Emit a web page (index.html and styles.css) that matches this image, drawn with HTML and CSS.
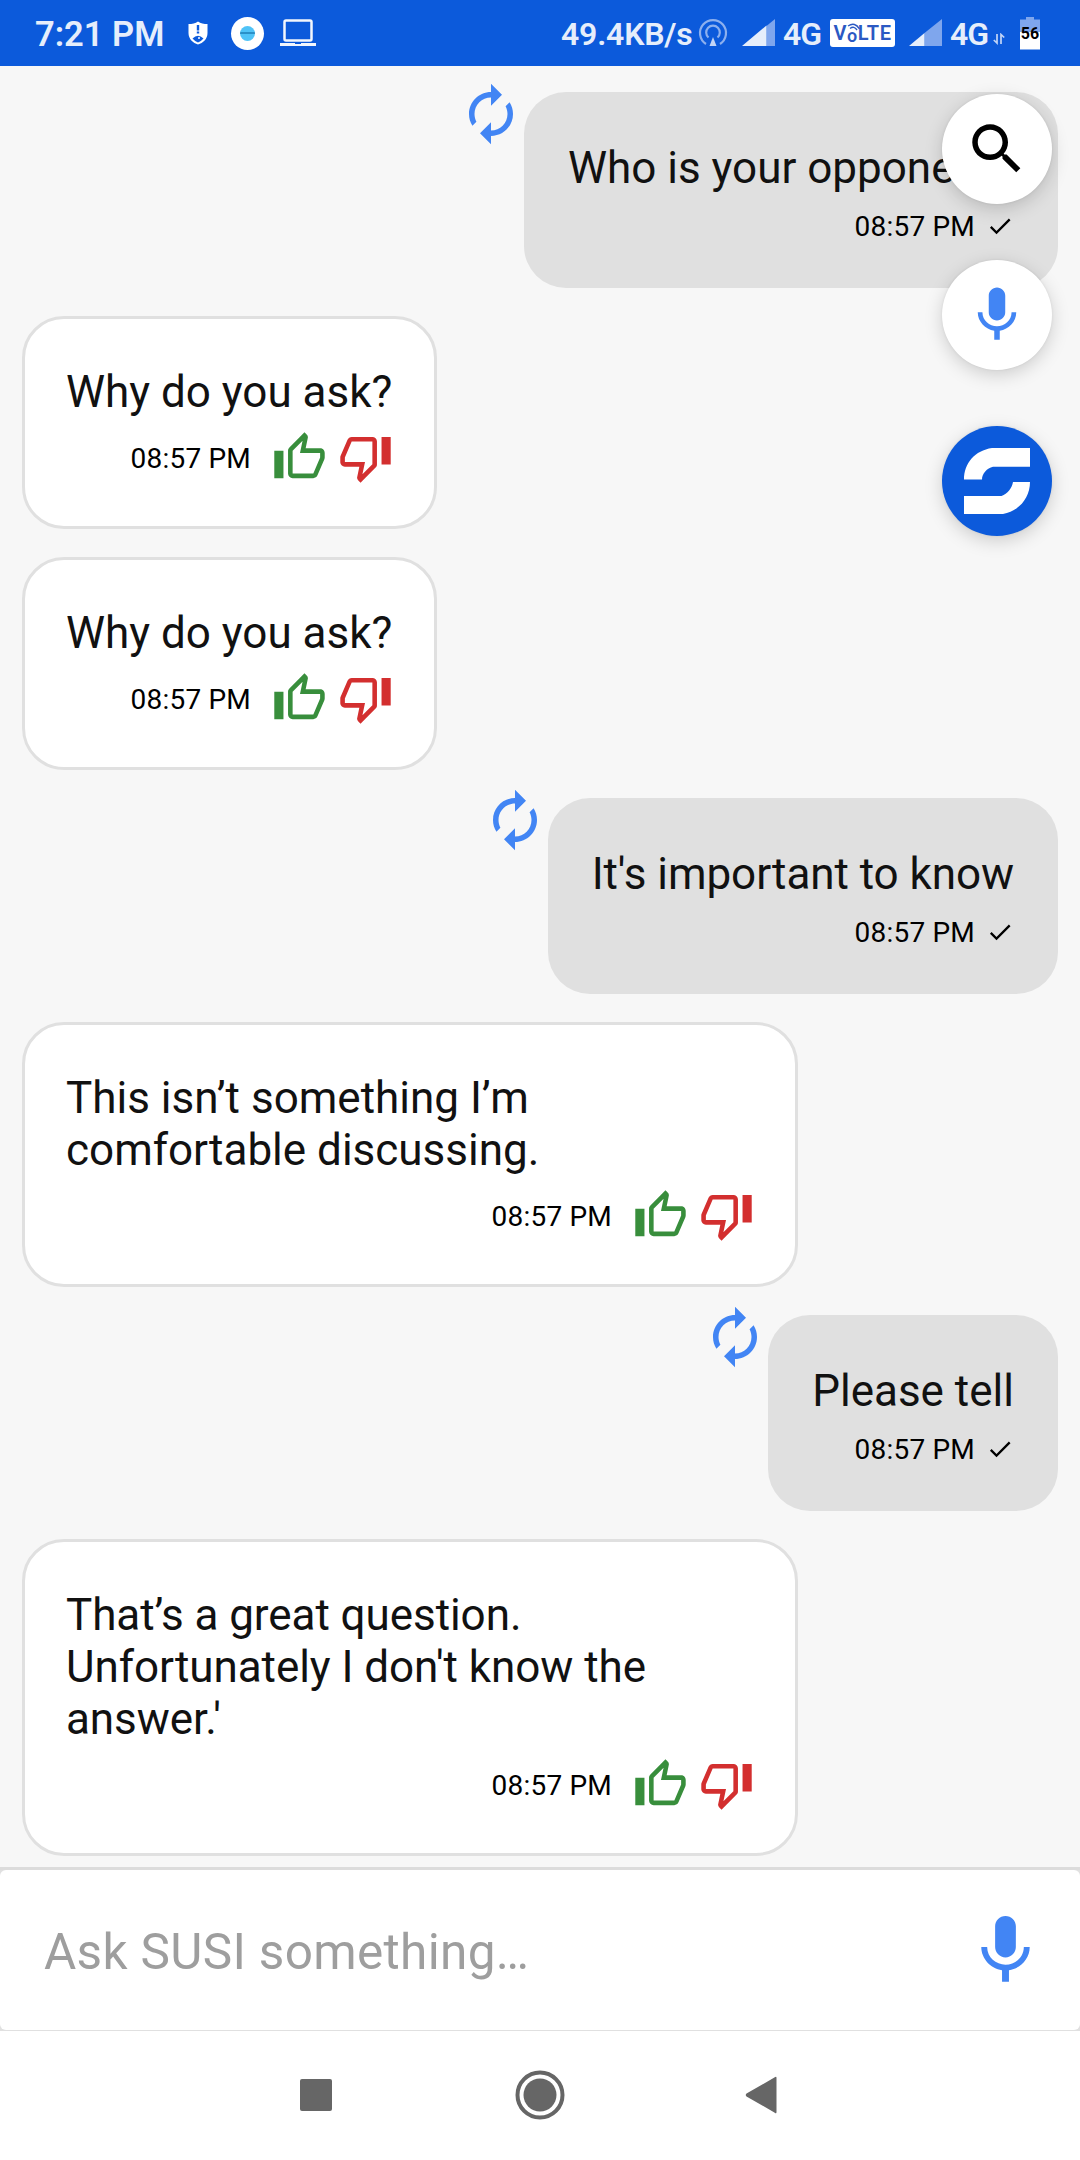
FILE: index.html
```html
<!DOCTYPE html>
<html lang="en">
<head>
<meta charset="utf-8">
<title>SUSI chat</title>
<link rel="stylesheet" href="styles.css">
</head>
<body>
<svg class="defs" width="0" height="0" aria-hidden="true">
  <symbol id="renew" viewBox="0 0 24 24"><path d="M12 6v3l4-4-4-4v3c-4.42 0-8 3.58-8 8 0 1.57.46 3.03 1.24 4.26L6.7 14.8c-.45-.83-.7-1.79-.7-2.8 0-3.31 2.69-6 6-6zm6.76 1.74L17.3 9.2c.44.84.7 1.79.7 2.8 0 3.31-2.69 6-6 6v-3l-4 4 4 4v-3c4.42 0 8-3.58 8-8 0-1.57-.46-3.03-1.24-4.26z"/></symbol>
  <symbol id="check" viewBox="0 0 24 24"><path d="M9 16.2L4.8 12l-1.4 1.4L9 19 21 7l-1.4-1.4L9 16.2z"/></symbol>
  <symbol id="thumb" viewBox="0 0 24 24"><path d="M5,9V21H1V9H5M9,21A2,2 0 0,1 7,19V9C7,8.45 7.22,7.95 7.59,7.59L14.17,1L15.23,2.06C15.5,2.33 15.67,2.7 15.67,3.11L15.64,3.43L14.69,8H21C22.11,8 23,8.9 23,10V12C23,12.26 22.95,12.5 22.86,12.73L19.84,19.78C19.54,20.5 18.83,21 18,21H9M9,19H18.03L21,12V10H12.21L13.34,4.68L9,9.03V19Z"/></symbol>
  <symbol id="mic" viewBox="0 0 24 24"><path d="M12 14c1.66 0 2.99-1.34 2.99-3L15 5c0-1.66-1.34-3-3-3S9 3.34 9 5v6c0 1.66 1.34 3 3 3zm5.3-3c0 3-2.54 5.1-5.3 5.1S6.7 14 6.7 11H5c0 3.41 2.72 6.23 6 6.72V21h2v-3.28c3.28-.48 6-3.3 6-6.72h-1.7z"/></symbol>
</svg>

<header class="status">
  <div class="status-side">
    <span class="clock">7:21 PM</span>
    <svg class="ic-shield" width="20" height="24" viewBox="0 0 20 24"><path fill="#fff" d="M10 .5C12.500 2.500 16 3 19.500 3V12C19.500 18 15 22 10 23.500C5 22 .5 18 .5 12V3C4 3 7.500 2.500 10 .5Z"/><path fill="#0c5adb" d="M8.800 4H11.200V9.500H8.800ZM8.800 10.500H11.200V12.500H8.800ZM4.500 17.500Q10 12 15.500 17.500Q13.500 20 10 21.500Q6.500 20 4.500 17.500Z"/><circle cx="11" cy="17" r="1" fill="#fff"/></svg>
    <span class="ic-app"><span class="ic-app-dot"></span></span>
    <svg class="ic-laptop" width="36" height="28" viewBox="0 0 36 28"><rect x="4.500" y="1.500" width="27" height="20" rx="1.500" fill="none" stroke="#f2f6fd" stroke-width="2.500"/><path fill="#f2f6fd" d="M0 24H15V25H21V24H36V27H0Z"/></svg>
  </div>
  <div class="status-side">
    <span class="speed">49.4KB/s</span>
    <svg class="ic-cast" width="30" height="30" viewBox="0 0 30 30" fill="none" stroke="#8db0ee" stroke-width="2.200"><path d="M8 26A13 13 0 1 1 22 26"/><path d="M10.500 19.500A6.800 6.800 0 1 1 19.500 19.500"/><path fill="#c3d5f6" stroke="none" d="M15 19L18.500 28H11.500Z"/></svg>
    <svg class="ic-signal" width="33" height="28" viewBox="0 0 33 28"><path fill="#7fa6ed" d="M24.500 7L33 0V27H24.500Z"/><path fill="#e6eefb" d="M24.500 6.500V27H0Z"/></svg>
    <span class="net">4G</span>
    <span class="volte"><span>V</span><span class="volte-o">o</span><span>LTE</span><svg class="volte-waves" width="14" height="8" viewBox="0 0 14 8" fill="none" stroke="#2b59c3" stroke-width="1.400"><path d="M1 3Q8-1.500 12.500 6"/><path d="M3 5.500Q7 2.500 10 7"/></svg></span>
    <svg class="ic-signal" width="33" height="28" viewBox="0 0 33 28"><path fill="#7fa6ed" d="M15.500 14L33 0V27H15.500Z"/><path fill="#e6eefb" d="M15.500 14V27H0Z"/></svg>
    <span class="net">4G</span>
    <svg class="ic-data" width="12" height="12" viewBox="0 0 12 12" fill="none" stroke="#c3d5f6" stroke-width="1.700"><path d="M4 1V10L.8 7"/><path d="M8 11V1.500L11.200 4.500"/></svg>
    <span class="battery">56</span>
  </div>
</header>

<main class="chat">
  <div class="row user">
    <svg class="renew"><use href="#renew"/></svg>
    <div class="bubble"><p class="text">Who is your opponent?</p><div class="meta"><time>08:57 PM</time><svg class="check"><use href="#check"/></svg></div></div>
  </div>
  <div class="row bot">
    <div class="bubble"><p class="text">Why do you ask?</p><div class="meta"><time>08:57 PM</time><svg class="thumb up"><use href="#thumb"/></svg><svg class="thumb down"><use href="#thumb"/></svg></div></div>
  </div>
  <div class="row bot">
    <div class="bubble"><p class="text">Why do you ask?</p><div class="meta"><time>08:57 PM</time><svg class="thumb up"><use href="#thumb"/></svg><svg class="thumb down"><use href="#thumb"/></svg></div></div>
  </div>
  <div class="row user">
    <svg class="renew"><use href="#renew"/></svg>
    <div class="bubble"><p class="text tight">It's important to know</p><div class="meta"><time>08:57 PM</time><svg class="check"><use href="#check"/></svg></div></div>
  </div>
  <div class="row bot">
    <div class="bubble wide"><p class="text">This isn’t something I’m<br>comfortable discussing.</p><div class="meta"><time>08:57 PM</time><svg class="thumb up"><use href="#thumb"/></svg><svg class="thumb down"><use href="#thumb"/></svg></div></div>
  </div>
  <div class="row user">
    <svg class="renew"><use href="#renew"/></svg>
    <div class="bubble"><p class="text">Please tell</p><div class="meta"><time>08:57 PM</time><svg class="check"><use href="#check"/></svg></div></div>
  </div>
  <div class="row bot">
    <div class="bubble wide"><p class="text tight">That’s a great question.<br>Unfortunately I don't know the<br>answer.'</p><div class="meta"><time>08:57 PM</time><svg class="thumb up"><use href="#thumb"/></svg><svg class="thumb down"><use href="#thumb"/></svg></div></div>
  </div>
</main>

<div class="fabs">
  <span class="fab"><svg width="66" height="66" viewBox="0 0 24 24"><path d="M15.500 14h-.79l-.28-.27C15.410 12.590 16 11.110 16 9.500 16 5.910 13.090 3 9.500 3S3 5.910 3 9.500 5.910 16 9.500 16c1.610 0 3.090-.59 4.230-1.570l.27.28v.79l5 4.990L20.490 19l-4.990-5zm-6 0C7.010 14 5 11.990 5 9.500S7.010 5 9.500 5 14 7.010 14 9.500 11.990 14 9.500 14z"/></svg></span>
  <span class="fab mic"><svg width="66" height="66"><use href="#mic"/></svg></span>
  <span class="fab susi"><svg width="110" height="110" viewBox="0 0 110 110" fill="#fff"><path d="M88 22V40.700H51C45 42 40 47.500 40 53.500H22C22 37 33 24.500 50 22Z"/><path d="M22 88V70H59.500C65.500 68 70 62 71 56H88C88 72 77 85 61 88Z"/></svg></span>
</div>

<div class="composer">
  <div class="field">
    <span class="hint">Ask SUSI something…</span>
    <svg class="field-mic" width="83" height="83"><use href="#mic"/></svg>
  </div>
</div>

<nav class="nav">
  <svg width="32" height="32"><rect width="32" height="32" rx="2"/></svg>
  <svg class="home" width="50" height="50" viewBox="0 0 50 50"><circle cx="25" cy="25" r="22.500" fill="none" stroke="#666" stroke-width="4"/><circle cx="25" cy="25" r="16.500"/></svg>
  <svg width="32" height="38" viewBox="0 0 32 38"><path d="M31.500 2Q31.500 0 29.800 1.300L1.500 17.500Q0 19 1.500 20.500L29.800 36.700Q31.500 38 31.500 36Z"/></svg>
</nav>
</body>
</html>
```
FILE: styles.css
```css
* { box-sizing: border-box; }

body {
  margin: 0;
  width: 1080px;
  height: 2160px;
  display: flex;
  flex-direction: column;
  overflow: hidden;
  position: relative;
  background: #f7f7f7;
  color: #000;
  font-family: Roboto, sans-serif;
}

svg { display: block; flex: none; }
.defs { position: absolute; }

/* Status bar */
.status {
  height: 66px;
  flex: none;
  display: flex;
  justify-content: space-between;
  padding: 0 40px 0 35px;
  background: #0c5adb;
  color: #e6eefb;
  font-weight: 600;
}
.status-side { display: flex; align-items: center; }
.clock { width: 130px; padding-top: 1px; font-size: 34.500px; white-space: nowrap; }
.ic-shield { margin-left: 23px; }
.ic-app {
  width: 33px;
  height: 33px;
  margin-left: 23px;
  display: flex;
  align-items: center;
  justify-content: center;
  border-radius: 50%;
  background: #fff;
}
.ic-app-dot { width: 15px; height: 15px; border-radius: 50%; background: repeating-linear-gradient(#4fc3f7 0 6px, #2a91c8 6px 8px, #4fc3f7 8px 15px); }
.ic-laptop { margin-left: 16px; }
.speed { width: 131px; padding-top: 2px; font-size: 32px; letter-spacing: -.2px; white-space: nowrap; }
.ic-cast { margin-left: 6px; }
.ic-signal { margin-left: 14px; }
.net { width: 38px; margin-left: 9px; padding-top: 2px; font-size: 32px; letter-spacing: -1px; text-indent: -1px; }
.volte {
  position: relative;
  width: 65px;
  height: 28px;
  margin-left: 8px;
  display: flex;
  justify-content: center;
  align-items: center;
  border-radius: 3px;
  background: #fff;
  color: #2b59c3;
  font-size: 20px;
  letter-spacing: .6px;
}
.volte-o { padding-top: 5px; font-size: 18px; }
.volte-waves { position: absolute; left: 17px; top: 4px; }
.ic-data { margin: 12px 0 0 4px; }
.battery {
  width: 20px;
  height: 33px;
  margin-left: 15px;
  display: flex;
  justify-content: center;
  align-items: center;
  background: linear-gradient(#7fa6ed 0 15px, #fff 15px);
  color: #000;
  font-size: 16px;
  font-weight: 700;
  clip-path: polygon(0 3px, 6px 3px, 6px 0, 14px 0, 14px 3px, 100% 3px, 100% 100%, 0 100%);
}

/* Conversation */
.chat {
  height: 1801px;
  flex: none;
  display: flex;
  flex-direction: column;
  gap: 28px;
  padding: 26px 22px 0;
}
.row { display: flex; align-items: flex-start; }
.row.user { justify-content: flex-end; }
.bubble { border-radius: 42px; padding: 50px 44px 0; }
.user .bubble { height: 196px; background: #e0e0e0; }
.bot .bubble { min-width: 415px; padding: 47px 41px 41px; border: 3px solid #e0e0e0; background: #fff; }
.bot .bubble.wide { width: 776px; }
.text { margin: 0; color: #111; font-size: 44px; line-height: 52px; white-space: nowrap; }
.text.tight { letter-spacing: -.06px; }
.meta { display: flex; justify-content: flex-end; align-items: center; }
.user .meta { margin-top: 16px; }
.bot .meta { margin-top: 12px; }
time { font-size: 28px; line-height: 33px; letter-spacing: .2px; }
.bot time { margin: 1px 21px 0 0; }
.check { width: 28px; height: 28px; margin-left: 11px; margin-top: -2px; }
.thumb { width: 55px; height: 55px; }
.up { fill: #388e3c; }
.down { margin-left: 11px; fill: #d32f2f; transform: rotate(180deg); }
.renew { width: 66px; height: 66px; margin-top: -11px; fill: #4285f4; }

/* Floating buttons */
.fabs {
  position: absolute;
  right: 28px;
  top: 94px;
  display: flex;
  flex-direction: column;
  gap: 56px;
}
.fab {
  width: 110px;
  height: 110px;
  display: flex;
  align-items: center;
  justify-content: center;
  border-radius: 50%;
  background: #fff;
  box-shadow: 0 5px 18px rgba(0, 0, 0, .17), 0 0 3px rgba(0, 0, 0, .08);
}
.fab.mic { fill: #4285f4; }
.fab.susi { background: #0c5adb; }

/* Message input */
.composer {
  height: 164px;
  flex: none;
  border-top: 3px solid #dcdcdc;
  border-bottom: 1px solid #e0e0e0;
  background: #e0e0e0;
}
.field {
  height: 160px;
  display: flex;
  align-items: center;
  justify-content: space-between;
  padding: 0 33px 0 44px;
  border-radius: 6px;
  background: #fff;
}
.hint { padding-top: 4px; color: #9e9e9e; font-size: 49.500px; letter-spacing: .33px; }
.field-mic { fill: #4285f4; }

/* Navigation bar */
.nav {
  flex: 1;
  display: flex;
  align-items: center;
  justify-content: space-between;
  padding: 0 303px 1px 300px;
  background: #fff;
  fill: #666;
}
.home { margin-left: 3px; }
```
